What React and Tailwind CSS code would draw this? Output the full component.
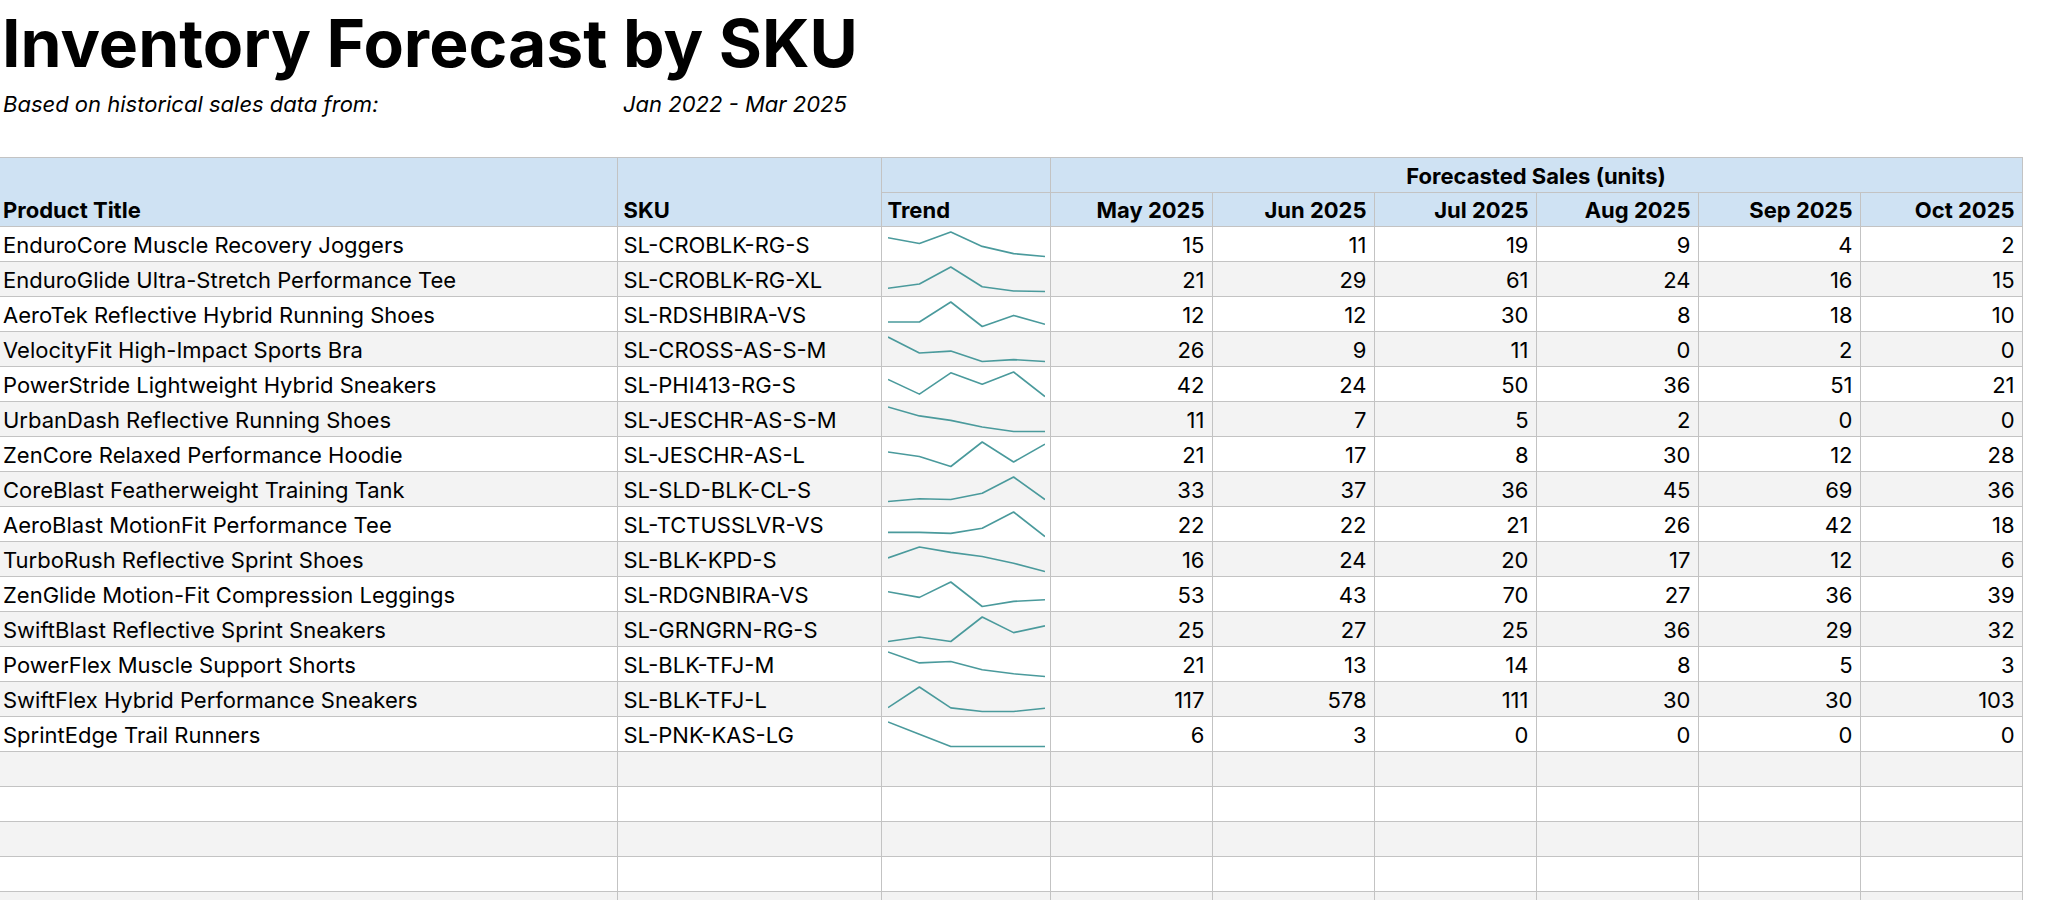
import React from 'react';

// forecast rows: title, sku, six months of forecast units
const rows = [
  ['EnduroCore Muscle Recovery Joggers', 'SL-CROBLK-RG-S', [15, 11, 19, 9, 4, 2]],
  ['EnduroGlide Ultra-Stretch Performance Tee', 'SL-CROBLK-RG-XL', [21, 29, 61, 24, 16, 15]],
  ['AeroTek Reflective Hybrid Running Shoes', 'SL-RDSHBIRA-VS', [12, 12, 30, 8, 18, 10]],
  ['VelocityFit High-Impact Sports Bra', 'SL-CROSS-AS-S-M', [26, 9, 11, 0, 2, 0]],
  ['PowerStride Lightweight Hybrid Sneakers', 'SL-PHI413-RG-S', [42, 24, 50, 36, 51, 21]],
  ['UrbanDash Reflective Running Shoes', 'SL-JESCHR-AS-S-M', [11, 7, 5, 2, 0, 0]],
  ['ZenCore Relaxed Performance Hoodie', 'SL-JESCHR-AS-L', [21, 17, 8, 30, 12, 28]],
  ['CoreBlast Featherweight Training Tank', 'SL-SLD-BLK-CL-S', [33, 37, 36, 45, 69, 36]],
  ['AeroBlast MotionFit Performance Tee', 'SL-TCTUSSLVR-VS', [22, 22, 21, 26, 42, 18]],
  ['TurboRush Reflective Sprint Shoes', 'SL-BLK-KPD-S', [16, 24, 20, 17, 12, 6]],
  ['ZenGlide Motion-Fit Compression Leggings', 'SL-RDGNBIRA-VS', [53, 43, 70, 27, 36, 39]],
  ['SwiftBlast Reflective Sprint Sneakers', 'SL-GRNGRN-RG-S', [25, 27, 25, 36, 29, 32]],
  ['PowerFlex Muscle Support Shorts', 'SL-BLK-TFJ-M', [21, 13, 14, 8, 5, 3]],
  ['SwiftFlex Hybrid Performance Sneakers', 'SL-BLK-TFJ-L', [117, 578, 111, 30, 30, 103]],
  ['SprintEdge Trail Runners', 'SL-PNK-KAS-LG', [6, 3, 0, 0, 0, 0]],
];

const months = ['May 2025', 'Jun 2025', 'Jul 2025', 'Aug 2025', 'Sep 2025', 'Oct 2025'];

const Sparkline = ({ values }) => {
  const w = 157;
  const min = Math.min(...values);
  const max = Math.max(...values);
  const span = max - min || 1;
  const pts = values
    .map((v, i) => {
      const x = (i / (values.length - 1)) * w;
      const y = 28.5 - ((v - min) / span) * 24.5;
      return `${x.toFixed(1)},${y.toFixed(1)}`;
    })
    .join(' ');
  return (
    <svg width={w} height="33" viewBox={`0 0 ${w} 33`} className="block">
      <polyline points={pts} fill="none" stroke="#4a9a9c" strokeWidth="1.6" strokeLinejoin="round" />
    </svg>
  );
};

const cell = 'border border-[#c3c3c3] align-bottom pb-[4px] leading-6 overflow-hidden whitespace-nowrap';

export default function App() {
  return (
    <div className="bg-white text-black min-h-screen" style={{ fontFamily: 'Inter, "Liberation Sans", sans-serif' }}>
      {/* title block */}
      <h1 className="pt-[10px] pl-[2px] text-[66px] leading-none font-bold">Inventory Forecast by SKU</h1>
      <div className="mt-[16px] flex text-[22px] leading-6 italic">
        <span className="w-[617px] pl-[3px]">Based on historical sales data from:</span>
        <span className="pl-[6px]">Jan 2022 - Mar 2025</span>
      </div>
      <div className="h-[41px]" />

      <table className="table-fixed border-collapse w-[2022px] text-[22px]">
        <colgroup>
          <col className="w-[617px]" />
          <col className="w-[264px]" />
          <col className="w-[169px]" />
          {months.map((m) => (
            <col key={m} className="w-[162px]" />
          ))}
        </colgroup>
        <thead>
          <tr className="h-[35px] bg-[#cfe2f3] font-bold">
            <th rowSpan={2} className={`${cell} text-left pl-[3px] border-l-0`}>Product Title</th>
            <th rowSpan={2} className={`${cell} text-left pl-[6px]`}>SKU</th>
            <th className={cell} />
            <th colSpan={6} className={`${cell} text-center`}>Forecasted Sales (units)</th>
          </tr>
          <tr className="h-[34px] bg-[#cfe2f3] font-bold">
            <th className={`${cell} text-left pl-[6px]`}>Trend</th>
            {months.map((m) => (
              <th key={m} className={`${cell} text-right pr-[7px]`}>{m}</th>
            ))}
          </tr>
        </thead>
        <tbody>
          {rows.map(([title, sku, vals], i) => (
            <tr key={sku} className={`h-[35px] ${i % 2 ? 'bg-[#f3f3f3]' : 'bg-white'}`}>
              <td className={`${cell} pl-[3px] border-l-0`}>{title}</td>
              <td className={`${cell} pl-[6px]`}>{sku}</td>
              <td className="border border-[#c3c3c3] p-0 px-[6px] align-middle">
                <Sparkline values={vals} />
              </td>
              {vals.map((v, j) => (
                <td key={j} className={`${cell} text-right pr-[7px]`}>{v}</td>
              ))}
            </tr>
          ))}
          {[0, 1, 2, 3, 4].map((k) => (
            <tr key={k} className={`h-[35px] ${k % 2 ? 'bg-white' : 'bg-[#f3f3f3]'}`}>
              <td className={`${cell} border-l-0`} />
              <td className={cell} />
              <td className={cell} />
              {months.map((m) => (
                <td key={m} className={cell} />
              ))}
            </tr>
          ))}
        </tbody>
      </table>
    </div>
  );
}
